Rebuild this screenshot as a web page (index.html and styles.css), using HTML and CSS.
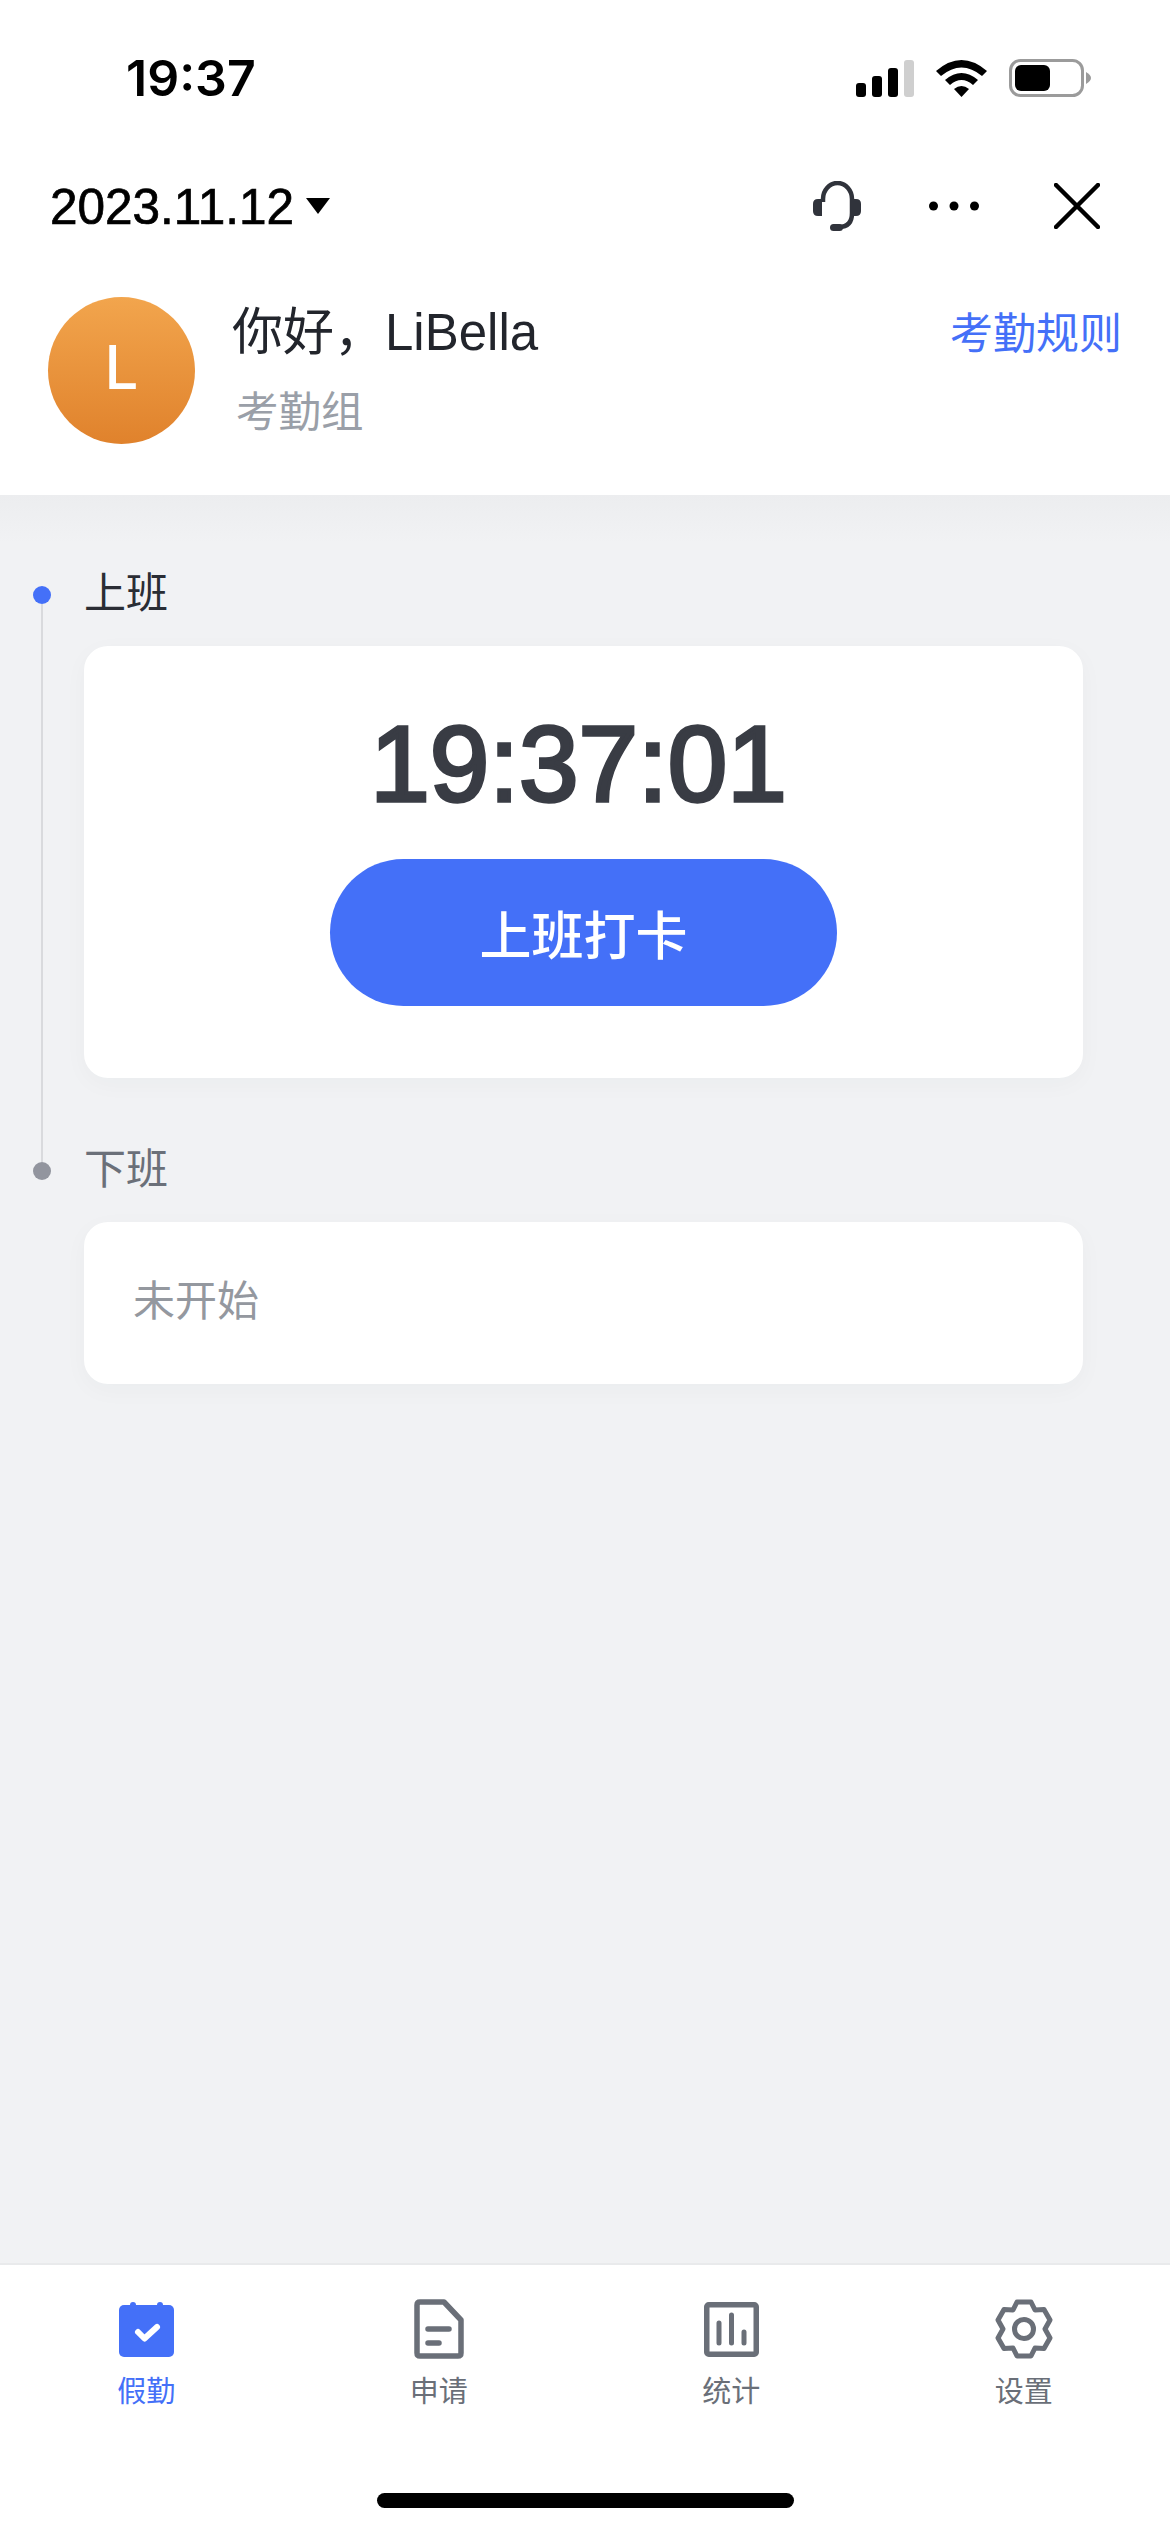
FILE: index.html
```html
<!DOCTYPE html>
<html lang="zh-CN">
<head>
    <meta charset="UTF-8">
    <meta name="viewport" content="width=device-width, initial-scale=1.0">
    <title>假勤</title>
    <link rel="stylesheet" href="styles.css">
</head>
<body>
    <div class="app">
        <div class="status-bar">
            <span class="status-time">19:37</span>
            <div class="status-icons">
                <svg width="58" height="37" viewBox="0 0 58 37">
                    <rect x="0" y="23" width="10" height="14" rx="3"/>
                    <rect x="16" y="16" width="10" height="21" rx="3"/>
                    <rect x="32" y="8" width="10" height="29" rx="3"/>
                    <rect x="48" y="0" width="10" height="37" rx="3" fill="#cfcfcf"/>
                </svg>
                <svg width="51" height="37" viewBox="0 0 51 37">
                    <path d="M0 11 Q25.5 -11 51 11 L46 16 Q25.5 -1 5 16 Z"/>
                    <path d="M9 20 Q25.5 6 42 20 L37 25 Q25.5 15 14 25 Z"/>
                    <path d="M18 29 Q25.5 23 33 29 L25.5 37 Z"/>
                </svg>
                <svg width="82" height="38" viewBox="0 0 82 38">
                    <rect x="1.5" y="1.5" width="72" height="35" rx="10" fill="none" stroke="#9b9b9b" stroke-width="3"/>
                    <rect x="6" y="6" width="35" height="26" rx="6"/>
                    <path d="M77 13 Q82 16 82 19 Q82 22 77 25 Z" fill="#9b9b9b"/>
                </svg>
            </div>
        </div>

        <div class="nav-bar">
            <div class="nav-date">
                <span>2023.11.12</span>
                <i class="caret"></i>
            </div>
            <div class="nav-actions">
                <svg width="48" height="50" viewBox="0 0 48 50" fill="none" stroke="#30333b">
                    <path d="M10 21 V18 A14.5 16 0 0 1 39 18 V32 Q39 46 26 46" stroke-width="4.5"/>
                    <path d="M9 18 V35 H5 Q0 35 0 30 V23 Q0 18 5 18 Z" fill="#30333b" stroke="none"/>
                    <path d="M39 18 V35 H43 Q48 35 48 30 V23 Q48 18 43 18 Z" fill="#30333b" stroke="none"/>
                    <rect x="17" y="43" width="13" height="7" rx="3.5" fill="#30333b" stroke="none"/>
                </svg>
                <svg width="50" height="10" viewBox="0 0 50 10">
                    <circle cx="4.5" cy="5" r="4.5"/>
                    <circle cx="25" cy="5" r="4.5"/>
                    <circle cx="45.5" cy="5" r="4.5"/>
                </svg>
                <svg class="nav-close" width="46" height="46" viewBox="0 0 46 46" stroke="#000" stroke-width="4.5" stroke-linecap="round">
                    <path d="M2 2 L44 44 M44 2 L2 44"/>
                </svg>
            </div>
        </div>

        <div class="profile">
            <div class="avatar">L</div>
            <div class="profile-text">
                <div class="greeting">你好，LiBella</div>
                <div class="group">考勤组</div>
            </div>
            <a class="rules">考勤规则</a>
        </div>

        <div class="content">
            <section class="punch">
                <div class="rail">
                    <i class="dot dot-active"></i>
                    <i class="line"></i>
                </div>
                <div class="punch-body punch-body-first">
                    <div class="punch-label">上班</div>
                    <div class="card card-clock">
                        <div class="clock">19:37:01</div>
                        <button class="punch-btn" type="button">上班打卡</button>
                    </div>
                </div>
            </section>

            <section class="punch">
                <div class="rail">
                    <i class="line line-stub"></i>
                    <i class="dot"></i>
                </div>
                <div class="punch-body">
                    <div class="punch-label punch-label-off">下班</div>
                    <div class="card card-idle">未开始</div>
                </div>
            </section>
        </div>

        <div class="tab-bar">
            <div class="tab tab-active">
                <div class="tab-icon">
                    <svg width="55" height="55" viewBox="0 0 55 55">
                        <rect x="0" y="3" width="55" height="52" rx="5" fill="#4470f8"/>
                        <rect x="11" y="0" width="6" height="8" rx="3" fill="#4470f8"/>
                        <rect x="38" y="0" width="6" height="8" rx="3" fill="#4470f8"/>
                        <path d="M19 30 L25.5 36.5 L38 25" fill="none" stroke="#fff" stroke-width="6" stroke-linecap="round" stroke-linejoin="round"/>
                    </svg>
                </div>
                <span>假勤</span>
            </div>
            <div class="tab">
                <div class="tab-icon">
                    <svg width="50" height="60" viewBox="0 0 50 60" fill="none" stroke="#6a6f78" stroke-width="5.5" stroke-linecap="round" stroke-linejoin="round">
                        <path d="M3 6 Q3 3 6 3 H30 L47 21 V54 Q47 57 44 57 H6 Q3 57 3 54 Z"/>
                        <path d="M14 30 H35 M14 44 H25"/>
                    </svg>
                </div>
                <span>申请</span>
            </div>
            <div class="tab">
                <div class="tab-icon">
                    <svg width="55" height="55" viewBox="0 0 55 55" fill="none" stroke="#6a6f78" stroke-linecap="round">
                        <rect x="2.75" y="2.75" width="49.5" height="49.5" rx="2" stroke-width="5.5"/>
                        <path d="M15 21 V41 M27.5 13 V41 M40 30 V41" stroke-width="5"/>
                    </svg>
                </div>
                <span>统计</span>
            </div>
            <div class="tab">
                <div class="tab-icon">
                    <svg width="58" height="60" viewBox="0 0 58 60" fill="none" stroke="#6a6f78" stroke-width="5" stroke-linejoin="round">
                        <path d="M22 3 H36 L40 11 L49 10.5 L55 21 L50 30 L55 39 L49 49.5 L40 49 L36 57 H22 L18 49 L9 49.5 L3 39 L8 30 L3 21 L9 10.5 L18 11 Z"/>
                        <circle cx="29" cy="30" r="9.5"/>
                    </svg>
                </div>
                <span>设置</span>
            </div>
        </div>

        <div class="home-area">
            <i class="home-indicator"></i>
        </div>
    </div>
</body>
</html>
```

FILE: styles.css
```css
body {
    margin: 0;
    font-family: Inter, "Liberation Sans", "Noto Sans CJK SC", sans-serif;
    background-color: #f1f2f4;
}
.app {
    display: flex;
    flex-direction: column;
    width: 1170px;
    height: 2532px;
    overflow: hidden;
}
.status-bar {
    display: flex;
    align-items: center;
    justify-content: space-between;
    height: 156px;
    box-sizing: border-box;
    padding: 0 79px 0 126px;
    background-color: #fff;
}
.status-time {
    font-size: 50px;
    font-weight: 600;
    color: #000;
}
.status-icons {
    display: flex;
    align-items: center;
    gap: 22px;
}
.nav-bar {
    display: flex;
    align-items: center;
    justify-content: space-between;
    height: 100px;
    padding: 0 70px 0 50px;
    background-color: #fff;
}
.nav-date {
    display: flex;
    align-items: center;
    gap: 12px;
    font-family: "Liberation Sans", sans-serif;
    font-size: 49.5px;
    -webkit-text-stroke: 0.7px #000;
    color: #000;
}
.caret {
    width: 0;
    height: 0;
    border-left: 12px solid transparent;
    border-right: 12px solid transparent;
    border-top: 16px solid #000;
}
.nav-actions {
    display: flex;
    align-items: center;
    gap: 68px;
}
.nav-close {
    margin-left: 7px;
}
.profile {
    display: flex;
    height: 239px;
    box-sizing: border-box;
    padding: 41px 48px 0 48px;
    background-color: #fff;
}
.avatar {
    display: flex;
    align-items: center;
    justify-content: center;
    flex-shrink: 0;
    box-sizing: border-box;
    width: 147px;
    height: 147px;
    padding-bottom: 8px;
    border-radius: 50%;
    background: linear-gradient(180deg, #f2a54d, #e0822c);
    color: #fff;
    font-size: 60px;
    font-weight: 500;
}
.profile-text {
    flex: 1;
    margin-left: 37px;
}
.greeting {
    font-family: "Liberation Sans", "Noto Sans CJK SC", sans-serif;
    font-size: 51px;
    line-height: 72px;
    color: #22252c;
}
.group {
    margin-top: 13px;
    margin-left: 4px;
    font-size: 42.5px;
    line-height: 60px;
    color: #9a9fa8;
}
.rules {
    font-size: 43px;
    line-height: 72px;
    color: #4470f8;
}
.content {
    flex: 1;
    padding-top: 70px;
    background: linear-gradient(180deg, #ecedef, #f1f2f4 48px) no-repeat;
    background-color: #f1f2f4;
}
.punch {
    display: flex;
    padding-right: 87px;
}
.rail {
    display: flex;
    flex-direction: column;
    align-items: center;
    flex-shrink: 0;
    width: 84px;
}
.dot {
    flex-shrink: 0;
    width: 18px;
    height: 18px;
    border-radius: 50%;
    background-color: #92959e;
}
.dot-active {
    margin-top: 21px;
    background-color: #4470f8;
}
.line {
    flex: 1;
    width: 2px;
    background-color: #d9dadd;
}
.line-stub {
    flex: none;
    height: 21px;
}
.punch-body {
    flex: 1;
}
.punch-body-first {
    padding-bottom: 63px;
}
.punch-label {
    height: 60px;
    margin-bottom: 21px;
    font-size: 42px;
    line-height: 56px;
    color: #2a2d34;
}
.punch-label-off {
    color: #6b7079;
}
.card {
    border-radius: 24px;
    background-color: #fff;
    box-shadow: 0 6px 24px rgba(40, 50, 70, 0.03);
}
.card-clock {
    display: flex;
    flex-direction: column;
    align-items: center;
    height: 432px;
    box-sizing: border-box;
    padding-top: 48px;
}
.clock {
    margin-right: 10px;
    font-family: "Liberation Sans", sans-serif;
    font-size: 107px;
    line-height: 140px;
    -webkit-text-stroke: 3.5px #393c44;
    color: #393c44;
}
.punch-btn {
    width: 507px;
    height: 147px;
    margin-top: 25px;
    border: none;
    border-radius: 74px;
    background-color: #4470f8;
    color: #fff;
    font-family: inherit;
    font-size: 52px;
    font-weight: 500;
    cursor: pointer;
}
.card-idle {
    height: 162px;
    box-sizing: border-box;
    padding-left: 49px;
    font-size: 42px;
    line-height: 158px;
    color: #94989f;
}
.tab-bar {
    display: grid;
    grid-template-columns: repeat(4, 292.5px);
    height: 165px;
    box-sizing: border-box;
    padding-top: 34px;
    border-top: 2px solid #e9eaec;
    background-color: #fff;
}
.tab {
    display: flex;
    flex-direction: column;
    align-items: center;
    font-size: 29px;
    line-height: 36px;
    color: #6a6f78;
}
.tab-icon {
    display: flex;
    align-items: center;
    justify-content: center;
    height: 60px;
    margin-bottom: 15px;
}
.tab-active {
    color: #4470f8;
}
.home-area {
    display: flex;
    justify-content: center;
    height: 104px;
    background-color: #fff;
}
.home-indicator {
    width: 417px;
    height: 15px;
    margin-top: 65px;
    border-radius: 8px;
    background-color: #000;
}
```
